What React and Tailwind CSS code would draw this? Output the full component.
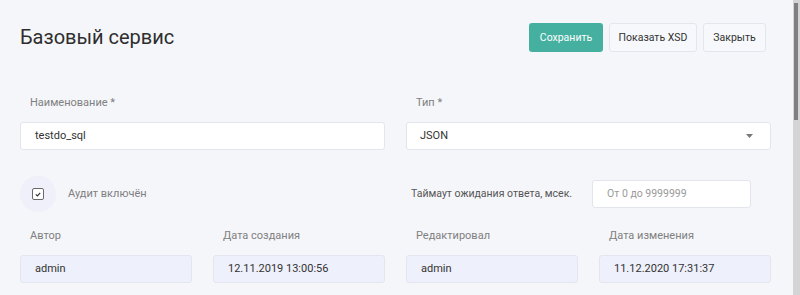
import React from 'react';

const font = { fontFamily: 'Roboto, "Noto Sans", sans-serif' };

const Label = ({ children, className = '' }) => (
    <div className={`pl-[10px] text-[11px] leading-4 text-[#808080] ${className}`}>{children}</div>
);

const ReadOnly = ({ value }) => (
    <div className="h-[28px] flex items-center pl-[14px] rounded-[3px] border border-[#e3e5ef] bg-[#eef0fb] text-[11px] text-[#333]">
        {value}
    </div>
);

const Field = ({ label, value }) => (
    <div>
        <Label>{label}</Label>
        <div className="mt-[11px]"><ReadOnly value={value} /></div>
    </div>
);

const App = () => {
    return (
        <div className="h-[295px] w-[800px] flex overflow-hidden bg-[#f5f6fa]" style={font}>
            <div className="flex-1 pl-5 pr-[22px]">
                <div className="flex items-center justify-between pt-[23px]">
                    <h1 className="text-[20px] leading-7 text-[#2e2e2e] -mt-[1px]">Базовый сервис</h1>
                    <div className="flex gap-[6px] mr-[5px]">
                        <button className="h-[29px] w-[74px] rounded-[3px] bg-[#45b0a0] text-white text-[10.5px]">Сохранить</button>
                        <button className="h-[29px] w-[88px] rounded-[3px] border border-[#e4e6ee] bg-[#f7f8fb] text-[#333] text-[10.5px]">Показать XSD</button>
                        <button className="h-[29px] w-[63px] rounded-[3px] border border-[#e4e6ee] bg-[#f7f8fb] text-[#333] text-[10.5px]">Закрыть</button>
                    </div>
                </div>

                <div className="grid grid-cols-2 gap-x-[21px] mt-[43px]">
                    <div>
                        <Label>Наименование *</Label>
                        <div className="mt-[11px] h-[28px] flex items-center pl-[14px] rounded-[3px] border border-[#e3e5ec] bg-white text-[11px] text-[#333]">
                            testdo_sql
                        </div>
                    </div>
                    <div>
                        <Label>Тип *</Label>
                        <div className="mt-[11px] h-[28px] flex items-center justify-between pl-[13px] pr-[17px] rounded-[3px] border border-[#e3e5ec] bg-white text-[11px] text-[#333]">
                            <span>JSON</span>
                            <svg width="7" height="4" viewBox="0 0 7 4"><path d="M0 0h7L3.5 4z" fill="#777" /></svg>
                        </div>
                    </div>
                </div>

                <div className="grid grid-cols-2 gap-x-[21px] mt-[26px] h-[28px]">
                    <div className="flex items-center">
                        <div className="w-9 h-9 rounded-full bg-[#eff0f9] flex items-center justify-center">
                            <div className="w-[12px] h-[12px] rounded-[2px] border border-[#6a6a6a] bg-white flex items-center justify-center">
                                <svg width="6" height="5" viewBox="0 0 6 5"><path d="M0.8 2.4l1.6 1.5 2.8-3" stroke="#333" strokeWidth="1.2" fill="none" /></svg>
                            </div>
                        </div>
                        <span className="ml-[12px] text-[11px] text-[#808080]">Аудит включён</span>
                    </div>
                    <div className="flex items-center">
                        <span className="pl-[5px] text-[10.5px] text-[#555] w-[186px]">Таймаут ожидания ответа, мсек.</span>
                        <div className="h-[28px] w-[159px] flex items-center pl-[14px] rounded-[3px] border border-[#e3e5ec] bg-white text-[10.5px] text-[#9a9a9a]">
                            От 0 до 9999999
                        </div>
                    </div>
                </div>

                <div className="grid grid-cols-4 gap-x-[21px] mt-[24px]">
                    <Field label="Автор" value="admin" />
                    <Field label="Дата создания" value="12.11.2019 13:00:56" />
                    <Field label="Редактировал" value="admin" />
                    <Field label="Дата изменения" value="11.12.2020 17:31:37" />
                </div>
            </div>
            <div className="w-[7px] h-full bg-[#d4d4d4] pt-[3px] pl-[1px]">
                <div className="w-[4px] h-[117px] bg-[#7f7f7f]" />
            </div>
        </div>
    );
};

export default App;
